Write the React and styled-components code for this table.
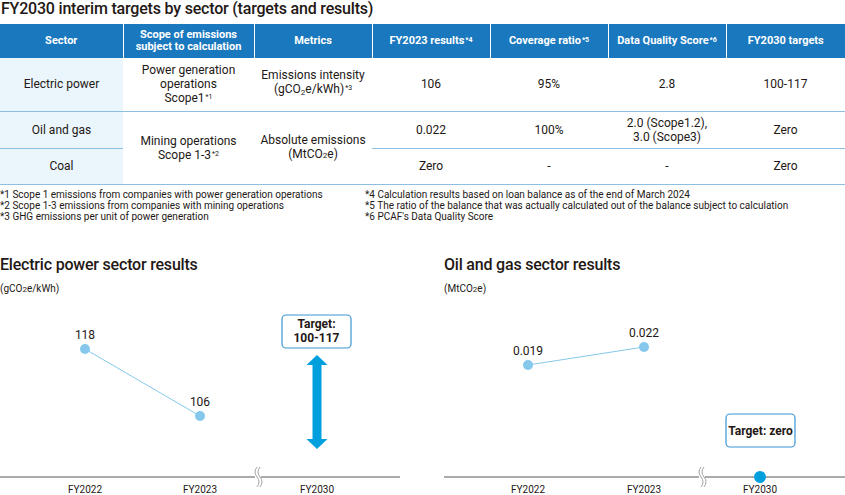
import React from "react";
import styled, { createGlobalStyle } from "styled-components";

const GlobalStyle = createGlobalStyle`
  html, body {
    margin: 0;
    padding: 0;
    background: #ffffff;
  }
  body {
    font-family: Roboto, "Liberation Sans", sans-serif;
    color: #231815;
  }
`;

const Page = styled.div`
  width: 845px;
  height: 495px;
  overflow: hidden;
`;

const Title = styled.h1`
  margin: 0;
  padding-left: 1px;
  font-size: 16px;
  line-height: 18px;
  font-weight: 500;
  letter-spacing: -0.2px;
`;

const Table = styled.table`
  margin-top: 6px;
  width: 845px;
  border-collapse: collapse;
  table-layout: fixed;
`;

const Th = styled.th`
  height: 34px;
  padding: 0;
  background: #1a78be;
  color: #ffffff;
  font-size: 11px;
  line-height: 12px;
  font-weight: 700;
  border-left: 1px solid #ffffff;

  &:first-child {
    border-left: none;
  }
`;

const Row = styled.tr`
  height: ${(p) => p.$h}px;
`;

const Td = styled.td`
  padding: 0;
  text-align: center;
  font-size: 12px;
  line-height: 14px;
  border-bottom: 1px solid #8cbfe2;
  background: ${(p) => (p.$shade ? "#eaf5fc" : "#ffffff")};
`;

const Note = styled.sup`
  font-size: 7px;
  vertical-align: top;
  position: relative;
  top: -1px;
  margin-left: 1px;
`;

const Sub = styled.sub`
  font-size: 8px;
  vertical-align: -2px;
`;

const Small = styled.span`
  font-size: 8px;
`;

const Footnotes = styled.div`
  display: grid;
  grid-template-columns: 365px 1fr;
  margin-top: 4px;
  font-size: 10px;
  line-height: 11px;
`;

const NoteList = styled.div`
  display: flex;
  flex-direction: column;
`;

const Charts = styled.div`
  display: grid;
  grid-template-columns: 420px 425px;
  margin-top: 33px;
`;

const Panel = styled.div`
  display: flex;
  flex-direction: column;
`;

const ChartTitle = styled.h2`
  margin: 0;
  padding-left: ${(p) => p.$indent}px;
  font-size: 16px;
  line-height: 20px;
  font-weight: 500;
  letter-spacing: -0.2px;
`;

const Unit = styled.div`
  margin-top: 8px;
  padding-left: ${(p) => p.$indent}px;
  font-size: 10px;
  line-height: 12px;
`;

const Plot = styled.svg`
  display: block;
  margin-top: 1px;
  font-family: Roboto, "Liberation Sans", sans-serif;
  overflow: visible;
`;

const Axis = styled.line`
  stroke: #595757;
  stroke-width: 1;
`;

const Trend = styled.polyline`
  fill: none;
  stroke: #86c8ec;
  stroke-width: 1;
`;

const Dot = styled.circle`
  fill: ${(p) => (p.$target ? "#00a0df" : "#86c8ec")};
`;

const Value = styled.text`
  font-size: 12px;
  fill: #231815;
  text-anchor: middle;
`;

const Year = styled.text`
  font-size: 10px;
  fill: #231815;
  text-anchor: middle;
`;

const TargetBox = styled.rect`
  fill: #ffffff;
  stroke: #3b95d2;
  stroke-width: 1.2;
`;

const TargetText = styled.text`
  font-size: 12px;
  font-weight: 700;
  fill: #231815;
  text-anchor: middle;
`;

const Arrow = styled.polygon`
  fill: #00a0df;
`;

const BreakLine = styled.path`
  fill: none;
  stroke: #8a8a8a;
  stroke-width: 0.8;
`;

const BreakMark = ({ x, y }) => (
  <g>
    <rect x={x - 3} y={y - 3} width={6} height={6} fill="#ffffff" />
    <BreakLine d={`M${x - 1} ${y - 10} q-4 5 0 10 q4 5 0 10`} />
    <BreakLine d={`M${x + 2} ${y - 10} q-4 5 0 10 q4 5 0 10`} />
  </g>
);

const AXIS_Y = 180;

const Chart = ({ axisFrom, axisTo, breakX, years, points, children }) => (
  <Plot width={axisTo} height={198}>
    <Axis x1={axisFrom} y1={AXIS_Y} x2={axisTo} y2={AXIS_Y} />
    <BreakMark x={breakX} y={AXIS_Y} />
    <Trend points={points.map((p) => `${p.x},${p.y}`).join(" ")} />
    {points.map((p) => (
      <g key={p.label}>
        <Dot cx={p.x} cy={p.y} r={5} />
        <Value x={p.x} y={p.y - 10}>
          {p.label}
        </Value>
      </g>
    ))}
    {children}
    {years.map((y) => (
      <Year key={y.label} x={y.x} y={196}>
        {y.label}
      </Year>
    ))}
  </Plot>
);

const yearsAt = (xs) =>
  ["FY2022", "FY2023", "FY2030"].map((label, i) => ({ label, x: xs[i] }));

export default function App() {
  return (
    <Page>
      <GlobalStyle />
      <Title>FY2030 interim targets by sector (targets and results)</Title>

      <Table>
        <colgroup>
          <col style={{ width: 123 }} />
          <col style={{ width: 131 }} />
          <col style={{ width: 118 }} />
          <col style={{ width: 118 }} />
          <col style={{ width: 118 }} />
          <col style={{ width: 118 }} />
          <col style={{ width: 119 }} />
        </colgroup>
        <thead>
          <tr>
            <Th>Sector</Th>
            <Th>
              Scope of emissions
              <br />
              subject to calculation
            </Th>
            <Th>Metrics</Th>
            <Th>
              FY2023 results<Note>*4</Note>
            </Th>
            <Th>
              Coverage ratio<Note>*5</Note>
            </Th>
            <Th>
              Data Quality Score<Note>*6</Note>
            </Th>
            <Th>FY2030 targets</Th>
          </tr>
        </thead>
        <tbody>
          <Row $h={53}>
            <Td $shade>Electric power</Td>
            <Td>
              Power generation
              <br />
              operations
              <br />
              Scope1<Note>*1</Note>
            </Td>
            <Td>
              Emissions intensity
              <br />
              (gCO<Sub>2</Sub>e/kWh)<Note>*3</Note>
            </Td>
            <Td>106</Td>
            <Td>95%</Td>
            <Td>2.8</Td>
            <Td>100-117</Td>
          </Row>
          <Row $h={37}>
            <Td $shade>Oil and gas</Td>
            <Td rowSpan={2}>
              Mining operations
              <br />
              Scope 1-3<Note>*2</Note>
            </Td>
            <Td rowSpan={2}>
              Absolute emissions
              <br />
              (MtCO<Small>2</Small>e)
            </Td>
            <Td>0.022</Td>
            <Td>100%</Td>
            <Td>
              2.0 (Scope1.2),
              <br />
              3.0 (Scope3)
            </Td>
            <Td>Zero</Td>
          </Row>
          <Row $h={36}>
            <Td $shade>Coal</Td>
            <Td>Zero</Td>
            <Td>-</Td>
            <Td>-</Td>
            <Td>Zero</Td>
          </Row>
        </tbody>
      </Table>

      <Footnotes>
        <NoteList>
          <span>*1 Scope 1 emissions from companies with power generation operations</span>
          <span>*2 Scope 1-3 emissions from companies with mining operations</span>
          <span>*3 GHG emissions per unit of power generation</span>
        </NoteList>
        <NoteList>
          <span>*4 Calculation results based on loan balance as of the end of March 2024</span>
          <span>
            *5 The ratio of the balance that was actually calculated out of the balance subject to
            calculation
          </span>
          <span>*6 PCAF's Data Quality Score</span>
        </NoteList>
      </Footnotes>

      <Charts>
        <Panel>
          <ChartTitle $indent={0}>Electric power sector results</ChartTitle>
          <Unit $indent={0}>
            (gCO<Small>2</Small>e/kWh)
          </Unit>
          <Chart
            axisFrom={0}
            axisTo={400}
            breakX={258}
            years={yearsAt([85, 200, 317])}
            points={[
              { x: 85, y: 52, label: "118" },
              { x: 200, y: 119, label: "106" },
            ]}
          >
            <TargetBox x={282} y={18} width={69} height={33} rx={4} />
            <TargetText x={316.5} y={31}>
              Target:
            </TargetText>
            <TargetText x={316.5} y={45}>
              100-117
            </TargetText>
            <Arrow points="317,58 327.5,68 321.5,68 321.5,142 327.5,142 317,152 306.5,142 312.5,142 312.5,68 306.5,68" />
          </Chart>
        </Panel>

        <Panel>
          <ChartTitle $indent={24}>Oil and gas sector results</ChartTitle>
          <Unit $indent={24}>
            (MtCO<Small>2</Small>e)
          </Unit>
          <Chart
            axisFrom={24}
            axisTo={425}
            breakX={282}
            years={yearsAt([108, 224, 340])}
            points={[
              { x: 108, y: 68, label: "0.019" },
              { x: 224, y: 50, label: "0.022" },
            ]}
          >
            <TargetBox x={306} y={117} width={69} height={33} rx={4} />
            <TargetText x={340.5} y={138}>
              Target: zero
            </TargetText>
            <Dot $target cx={340} cy={AXIS_Y} r={6} />
          </Chart>
        </Panel>
      </Charts>
    </Page>
  );
}
